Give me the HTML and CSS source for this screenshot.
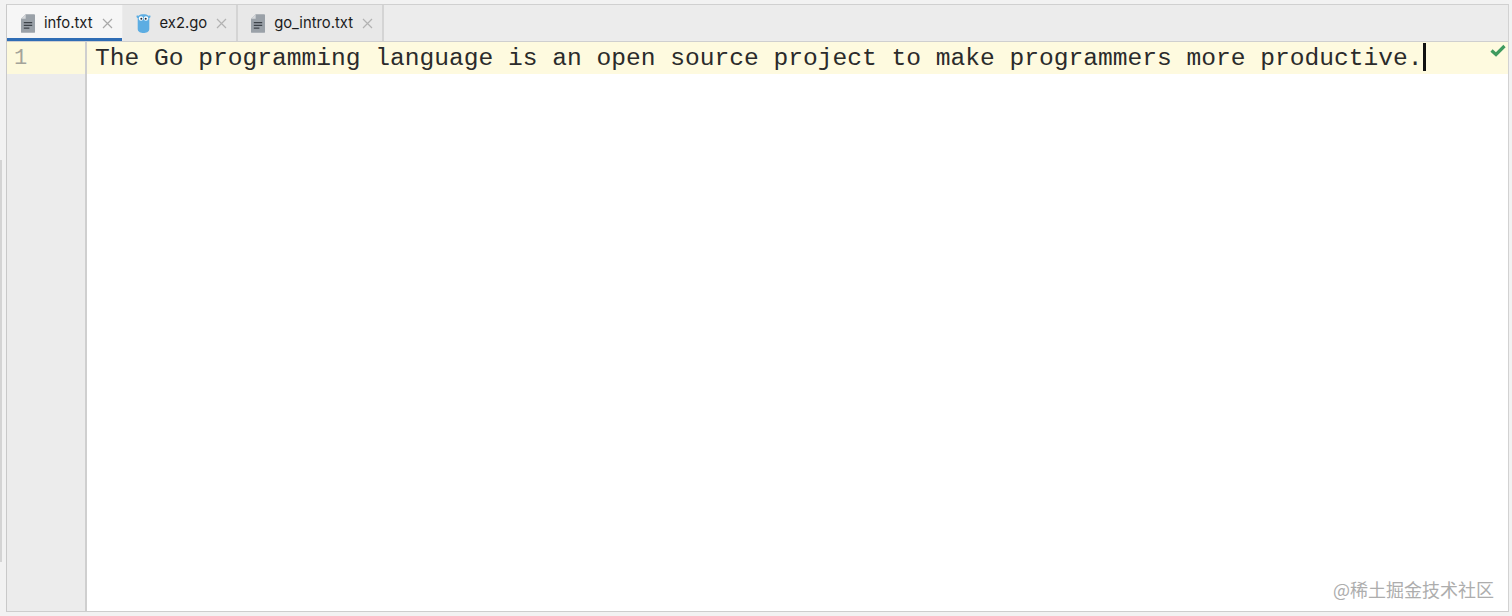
FILE: index.html
```html
<!DOCTYPE html>
<html lang="en">
<head>
  <meta charset="UTF-8" />
  <title>info.txt</title>
  <link rel="stylesheet" href="styles.css">
</head>
<body>

<div class="edge-mark"></div>

<div class="window">
  <div class="tabs">
    <div class="tab active">
      <svg class="file-icon" width="14" height="19" viewBox="0 0 15 20">
        <path d="M5 0H14a1 1 0 0 1 1 1V19a1 1 0 0 1-1 1H1a1 1 0 0 1-1-1V5z" fill="#9aa1a8"/>
        <path d="M5 0V5H0z" fill="#d5d8db"/>
        <path d="M3 9H12M3 12H12M3 15H9" stroke="#3c4248" stroke-width="1.3"/>
      </svg>
      <span class="tab-name">info.txt</span>
      <svg class="close" width="11" height="11" viewBox="0 0 11 11"><path d="M1 1L10 10M10 1L1 10" stroke="#a9a9a9" stroke-width="1.2"/></svg>
    </div>
    <div class="tab">
      <svg class="go-icon" width="15" height="20" viewBox="0 0 15 20">
        <path d="M3 2.500C4 .8 11 .8 12 2.500C13 3.500 14.500 1.500 14.500 3.500C14.500 4.500 13.500 5 13.300 5V16C13.300 19 10 20 7.500 20C5 20 1.700 19 1.700 16V5C1.500 5 .5 4.500 .5 3.500C.5 1.500 2 3.500 3 2.500Z" fill="#5dade2"/>
        <circle cx="5" cy="5.500" r="2.200" fill="#fff"/>
        <circle cx="10" cy="5.500" r="2.200" fill="#fff"/>
        <circle cx="5.300" cy="5.800" r="1" fill="#1d2b3a"/>
        <circle cx="9.700" cy="5.800" r="1" fill="#1d2b3a"/>
      </svg>
      <span class="tab-name">ex2.go</span>
      <svg class="close" width="11" height="11" viewBox="0 0 11 11"><path d="M1 1L10 10M10 1L1 10" stroke="#b2b2b2" stroke-width="1.2"/></svg>
    </div>
    <div class="tab">
      <svg class="file-icon" width="14" height="19" viewBox="0 0 15 20">
        <path d="M5 0H14a1 1 0 0 1 1 1V19a1 1 0 0 1-1 1H1a1 1 0 0 1-1-1V5z" fill="#9aa1a8"/>
        <path d="M5 0V5H0z" fill="#d5d8db"/>
        <path d="M3 9H12M3 12H12M3 15H9" stroke="#3c4248" stroke-width="1.3"/>
      </svg>
      <span class="tab-name">go_intro.txt</span>
      <svg class="close" width="11" height="11" viewBox="0 0 11 11"><path d="M1 1L10 10M10 1L1 10" stroke="#b2b2b2" stroke-width="1.2"/></svg>
    </div>
  </div>

  <div class="editor">
    <div class="gutter">
      <div class="line-number">1</div>
    </div>
    <div class="code">
      <div class="code-line">The Go programming language is an open source project to make programmers more productive.<span class="caret"></span></div>
      <svg class="check" width="16" height="13" viewBox="0 0 16 13"><path d="M1.500 6.500L6 10.500L14.500 2" fill="none" stroke="#3f9a5f" stroke-width="3.200"/></svg>
      <div class="watermark">@稀土掘金技术社区</div>
    </div>
  </div>
</div>

</body>
</html>
```

FILE: styles.css
```css
html, body {
  height: 100%;
}

body {
  margin: 0;
  background: #f2f2f2;
  overflow: hidden;
  font-family: Inter, "Liberation Sans", sans-serif;
}

.edge-mark {
  position: absolute;
  left: 0;
  top: 160px;
  width: 2px;
  height: 402px;
  background: #d4d4d4;
}

.window {
  box-sizing: border-box;
  height: 608px;
  margin: 4px 3px 0 6px;
  display: flex;
  flex-direction: column;
  border-top: 1px solid #d0d0d0;
  border-left: 1px solid #c9c9c9;
  border-right: 1px solid #d2d2d2;
  border-bottom: 1px solid #cdcdcd;
}

.tabs {
  display: flex;
  height: 37px;
  flex-shrink: 0;
  background: #ececec;
  border-bottom: 1px solid #cfcfcf;
  box-sizing: border-box;
}

.tab {
  display: flex;
  align-items: center;
  box-sizing: border-box;
  height: 36px;
  padding: 0 9px 0 13px;
  border-right: 2px solid #d4d4d4;
  color: #1c1c1c;
  font-size: 14.8px;
  background: #e8e8e8;
}

.tab.active {
  background: #f6f6f6;
  border-bottom: 3px solid #2f6db5;
  border-right: none;
  padding-top: 3px;
  padding-left: 14px;
  padding-right: 9px;
  margin-right: 1px;
}

.tab svg {
  flex-shrink: 0;
}

.tab-name {
  margin-left: 9px;
  margin-right: 9px;
}

.editor {
  flex: 1;
  display: flex;
  min-height: 0;
}

.gutter {
  width: 78px;
  flex-shrink: 0;
  background: #ececec;
  border-right: 2px solid #cfcfcf;
}

.line-number {
  height: 32px;
  padding-left: 7px;
  background: #fdf9dc;
  color: #a4a49a;
  font-family: "Liberation Mono", monospace;
  font-size: 22px;
  line-height: 34px;
}

.code {
  flex: 1;
  position: relative;
  background: #fff;
}

.code-line {
  height: 32px;
  padding-left: 8px;
  background: #fefadf;
  color: #2b2b2b;
  font-family: "Liberation Mono", monospace;
  font-size: 24.59px;
  line-height: 34px;
  white-space: pre;
}

.caret {
  display: inline-block;
  width: 3px;
  height: 28px;
  margin-left: 1px;
  background: #111;
  vertical-align: -6px;
}

.check {
  position: absolute;
  top: 2px;
  right: 2px;
}

.watermark {
  position: absolute;
  right: 14px;
  bottom: 10px;
  color: #adadad;
  font-family: "Noto Sans CJK SC", sans-serif;
  font-size: 18px;
  line-height: 24px;
}
```
